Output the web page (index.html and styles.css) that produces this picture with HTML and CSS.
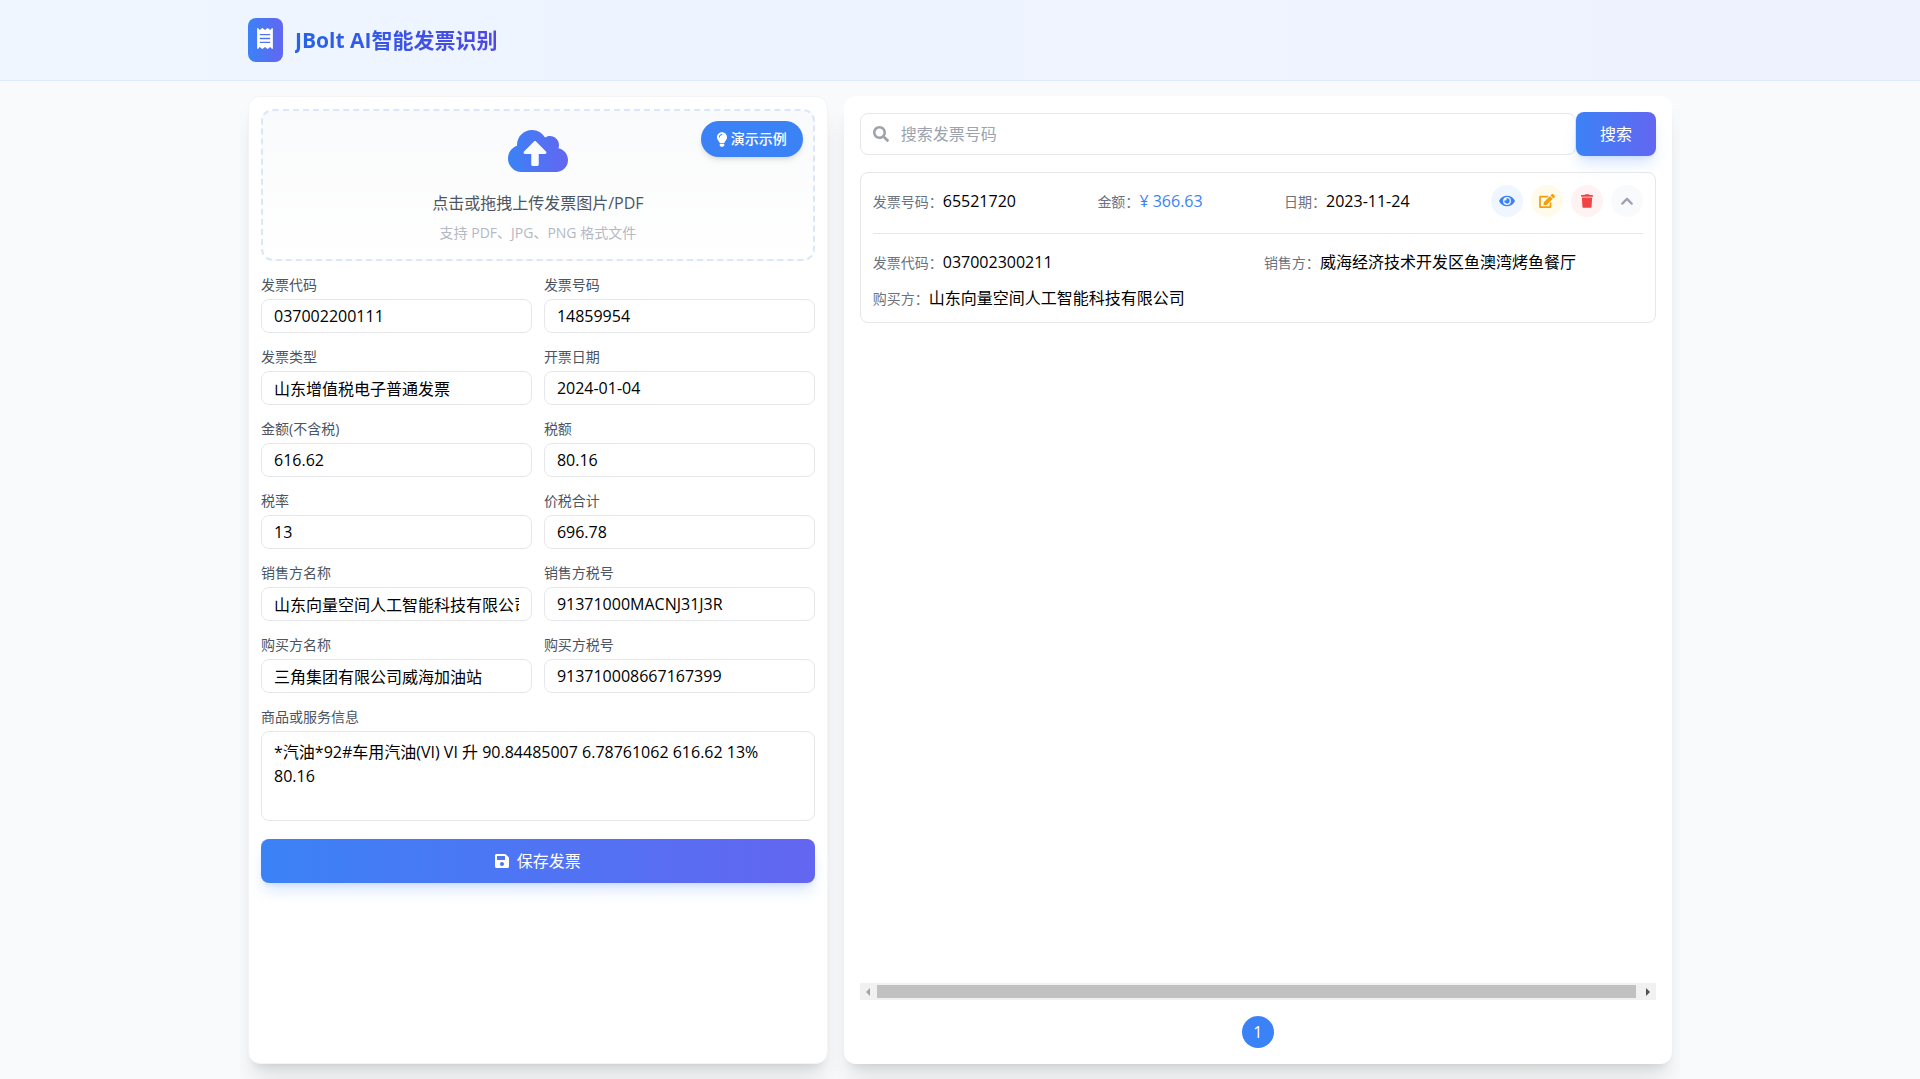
FILE: index.html
```html
<!DOCTYPE html>
<html lang="zh-CN">
<head>
<meta charset="utf-8">
<meta name="viewport" content="width=device-width, initial-scale=1">
<title>JBolt AI智能发票识别</title>
<link rel="stylesheet" href="styles.css">
</head>
<body>
<header class="header">
  <div class="container brand">
    <span class="logo">
      <svg width="16" height="21" viewBox="0 0 384 512" aria-hidden="true"><path fill="currentColor" fill-rule="evenodd" d="M358.4 3.2L320 48 265.6 3.2a15.9 15.9 0 0 0-19.2 0L192 48 137.6 3.2a15.9 15.9 0 0 0-19.2 0L64 48 25.6 3.2C15-4.7 0 2.8 0 16v480c0 13.2 15 20.7 25.6 12.8L64 464l54.4 44.8a15.9 15.9 0 0 0 19.2 0L192 464l54.4 44.8a15.9 15.9 0 0 0 19.2 0L320 464l38.4 44.8c10.5 7.9 25.6.4 25.6-12.8V16c0-13.2-15-20.7-25.6-12.8zM320 360a8 8 0 0 1-8 8H72a8 8 0 0 1-8-8v-16a8 8 0 0 1 8-8h240a8 8 0 0 1 8 8zM320 264a8 8 0 0 1-8 8H72a8 8 0 0 1-8-8v-16a8 8 0 0 1 8-8h240a8 8 0 0 1 8 8zM320 168a8 8 0 0 1-8 8H72a8 8 0 0 1-8-8v-16a8 8 0 0 1 8-8h240a8 8 0 0 1 8 8z"/></svg>
    </span>
    <h1 class="title">JBolt AI智能发票识别</h1>
  </div>
</header>

<main class="container main">
  <section class="card form-card">
    <div class="upload">
      <svg class="upload-icon" width="60" height="48" viewBox="0 0 640 512" aria-hidden="true"><defs><linearGradient id="cloud" x1="0" y1="0" x2="1" y2="0"><stop offset="0" stop-color="#3b82f6"/><stop offset="1" stop-color="#6366f1"/></linearGradient></defs><path fill="url(#cloud)" d="M537.6 226.6c4.1-10.7 6.4-22.4 6.4-34.6 0-53-43-96-96-96-19.7 0-38.1 6-53.3 16.2C367 64.2 315.3 32 256 32c-88.4 0-160 71.6-160 160 0 2.7.1 5.4.2 8.1C40.2 219.8 0 273.2 0 336c0 79.5 64.5 144 144 144h368c70.7 0 128-57.3 128-128 0-61.9-44-113.6-102.4-125.4zM393.4 288H328v112c0 8.8-7.2 16-16 16h-48c-8.8 0-16-7.2-16-16V288h-65.4c-14.3 0-21.4-17.2-11.3-27.3l105.4-105.4c6.2-6.2 16.4-6.2 22.6 0l105.4 105.4c10.1 10.1 2.9 27.3-11.3 27.3z"/></svg>
      <p class="upload-text">点击或拖拽上传发票图片/PDF</p>
      <p class="upload-hint">支持 PDF、JPG、PNG 格式文件</p>
      <button type="button" class="demo-btn">
        <svg width="10" height="15" viewBox="0 0 352 512" aria-hidden="true"><path fill="currentColor" d="M96.06 454.35c.01 6.29 1.87 12.45 5.36 17.69l17.09 25.69a31.99 31.99 0 0 0 26.64 14.28h61.71a31.99 31.99 0 0 0 26.64-14.28l17.09-25.69a31.989 31.989 0 0 0 5.36-17.69l.04-38.35H96.01l.05 38.35zM0 176c0 44.37 16.45 84.85 43.56 115.78 16.52 18.85 42.36 58.23 52.21 91.45.04.26.07.52.11.78h160.24c.04-.26.07-.51.11-.78 9.85-33.22 35.69-72.6 52.21-91.45C335.55 260.85 352 220.37 352 176 352 78.61 272.91-.3 175.45 0 73.44.31 0 82.97 0 176zm176-80c-44.11 0-80 35.89-80 80 0 8.84-7.16 16-16 16s-16-7.16-16-16c0-61.76 50.24-112 112-112 8.84 0 16 7.16 16 16s-7.16 16-16 16z"/></svg>
        <span>演示示例</span>
      </button>
    </div>

    <form class="form">
      <div class="field"><label for="code">发票代码</label><input id="code" type="text" value="037002200111"></div>
      <div class="field"><label for="number">发票号码</label><input id="number" type="text" value="14859954"></div>
      <div class="field"><label for="type">发票类型</label><input id="type" type="text" value="山东增值税电子普通发票"></div>
      <div class="field"><label for="date">开票日期</label><input id="date" type="text" value="2024-01-04"></div>
      <div class="field"><label for="amount">金额(不含税)</label><input id="amount" type="text" value="616.62"></div>
      <div class="field"><label for="tax">税额</label><input id="tax" type="text" value="80.16"></div>
      <div class="field"><label for="rate">税率</label><input id="rate" type="text" value="13"></div>
      <div class="field"><label for="total">价税合计</label><input id="total" type="text" value="696.78"></div>
      <div class="field"><label for="seller">销售方名称</label><input id="seller" type="text" value="山东向量空间人工智能科技有限公司"></div>
      <div class="field"><label for="seller-tax">销售方税号</label><input id="seller-tax" type="text" value="91371000MACNJ31J3R"></div>
      <div class="field"><label for="buyer">购买方名称</label><input id="buyer" type="text" value="三角集团有限公司威海加油站"></div>
      <div class="field"><label for="buyer-tax">购买方税号</label><input id="buyer-tax" type="text" value="913710008667167399"></div>
      <div class="field field-wide"><label for="goods">商品或服务信息</label><textarea id="goods" rows="3">*汽油*92#车用汽油(VI) VI 升 90.84485007 6.78761062 616.62 13% 80.16</textarea></div>
      <button type="button" class="primary save-btn">
        <svg width="14" height="16" viewBox="0 0 448 512" aria-hidden="true"><path fill="currentColor" d="M433.941 129.941l-83.882-83.882A48 48 0 0 0 316.118 32H48C21.49 32 0 53.49 0 80v352c0 26.51 21.49 48 48 48h352c26.51 0 48-21.49 48-48V163.882a48 48 0 0 0-14.059-33.941zM224 416c-35.346 0-64-28.654-64-64 0-35.346 28.654-64 64-64s64 28.654 64 64c0 35.346-28.654 64-64 64zm96-304.52V212c0 6.627-5.373 12-12 12H76c-6.627 0-12-5.373-12-12V108c0-6.627 5.373-12 12-12h228.52c3.183 0 6.235 1.264 8.485 3.515l3.48 3.48A11.996 11.996 0 0 1 320 111.48z"/></svg>
        <span>保存发票</span>
      </button>
    </form>
  </section>

  <section class="card list-card">
    <form class="search" role="search">
      <div class="search-box">
        <svg width="16" height="16" viewBox="0 0 512 512" aria-hidden="true"><path fill="currentColor" d="M505 442.7L405.3 343c-4.5-4.5-10.6-7-17-7H372c27.6-35.3 44-79.7 44-128C416 93.1 322.9 0 208 0S0 93.1 0 208s93.1 208 208 208c48.3 0 92.7-16.4 128-44v16.3c0 6.4 2.5 12.5 7 17l99.7 99.7c9.4 9.4 24.6 9.4 33.9 0l28.3-28.3c9.4-9.4 9.4-24.6.1-34zM208 336c-70.7 0-128-57.2-128-128 0-70.7 57.2-128 128-128 70.7 0 128 57.2 128 128 0 70.7-57.2 128-128 128z"/></svg>
        <input type="text" placeholder="搜索发票号码" aria-label="搜索发票号码">
      </div>
      <button type="button" class="primary search-btn">搜索</button>
    </form>

    <div class="results">
      <article class="invoice">
        <div class="summary">
          <p><span class="key">发票号码：</span>65521720</p>
          <p><span class="key">金额：</span><span class="money">¥ 366.63</span></p>
          <p><span class="key">日期：</span>2023-11-24</p>
          <div class="actions">
            <button type="button" class="action view" aria-label="查看"><svg width="16" height="14" viewBox="0 0 576 512"><path fill="currentColor" d="M572.52 241.4C518.29 135.59 410.93 64 288 64S57.68 135.64 3.48 241.41a32.35 32.35 0 0 0 0 29.19C57.71 376.41 165.07 448 288 448s230.32-71.64 284.52-177.41a32.35 32.35 0 0 0 0-29.19zM288 400a144 144 0 1 1 144-144 143.93 143.93 0 0 1-144 144zm0-240a95.31 95.31 0 0 0-25.31 3.79 47.85 47.85 0 0 1-66.9 66.9A95.78 95.78 0 1 0 288 160z"/></svg></button>
            <button type="button" class="action edit" aria-label="编辑"><svg width="16" height="14" viewBox="0 0 576 512"><path fill="currentColor" d="M402.6 83.2l90.2 90.2c3.8 3.8 3.8 10 0 13.8L274.4 405.6l-92.8 10.3c-12.4 1.4-22.9-9.1-21.5-21.5l10.3-92.8L388.8 83.2c3.8-3.8 10-3.8 13.8 0zm162-22.9l-48.8-48.8c-15.2-15.2-39.9-15.2-55.2 0l-35.4 35.4c-3.8 3.8-3.8 10 0 13.8l90.2 90.2c3.8 3.8 10 3.8 13.8 0l35.4-35.4c15.2-15.3 15.2-40 0-55.2zM384 346.2V448H64V128h229.8c3.2 0 6.2-1.3 8.5-3.5l40-40c7.6-7.6 2.2-20.5-8.5-20.5H48C21.5 64 0 85.5 0 112v352c0 26.5 21.5 48 48 48h352c26.5 0 48-21.5 48-48V306.2c0-10.7-12.9-16-20.5-8.5l-40 40c-2.2 2.3-3.5 5.3-3.5 8.5z"/></svg></button>
            <button type="button" class="action remove" aria-label="删除"><svg width="12" height="14" viewBox="0 0 448 512"><path fill="currentColor" d="M432 32H312l-9.4-18.7A24 24 0 0 0 281.1 0H166.8a23.72 23.72 0 0 0-21.4 13.3L136 32H16A16 16 0 0 0 0 48v32a16 16 0 0 0 16 16h416a16 16 0 0 0 16-16V48a16 16 0 0 0-16-16zM53.2 467a48 48 0 0 0 47.9 45h245.8a48 48 0 0 0 47.9-45L416 128H32z"/></svg></button>
            <button type="button" class="action toggle" aria-label="收起"><svg width="12" height="14" viewBox="0 0 12 14"><path fill="none" stroke="currentColor" stroke-width="2.2" stroke-linecap="round" stroke-linejoin="round" d="M1.3 9.6L6 4.9l4.7 4.7"/></svg></button>
          </div>
        </div>
        <div class="details">
          <p><span class="key">发票代码：</span>037002300211</p>
          <p><span class="key">销售方：</span>威海经济技术开发区鱼澳湾烤鱼餐厅</p>
          <p><span class="key">购买方：</span>山东向量空间人工智能科技有限公司</p>
        </div>
      </article>
    </div>

    <div class="scrollbar" aria-hidden="true">
      <span class="arrow arrow-left"></span>
      <span class="thumb"></span>
      <span class="arrow arrow-right"></span>
    </div>
    <nav class="pager" aria-label="分页"><button type="button" class="page">1</button></nav>
  </section>
</main>
</body>
</html>
```
FILE: styles.css
```css
* { box-sizing: border-box; }

body {
  margin: 0;
  min-height: 100vh;
  display: flex;
  flex-direction: column;
  background: #f9fafb linear-gradient(135deg, #f8fafc, #f9fafb);
  color: #000;
  font: 16px/24px "Open Sans", "Noto Sans CJK SC", sans-serif;
}

h1, p { margin: 0; }
svg { display: block; flex: none; }
button, input, textarea { font: inherit; color: inherit; }
button { border: 0; padding: 0; cursor: pointer; }

.container {
  width: 100%;
  max-width: 1440px;
  margin: 0 auto;
  padding: 0 8px;
}

/* Header */
.header {
  padding: 18px 0;
  border-bottom: 1px solid #dbeafe;
  background: linear-gradient(90deg, #eff6ff, #eef2ff);
}
.brand { display: flex; align-items: center; gap: 12px; }
.logo {
  display: flex;
  padding: 10px 10px 13px 9px;
  border-radius: 8px;
  color: #fff;
  background: linear-gradient(90deg, #3b82f6, #6366f1);
}
.title {
  font-size: 21px;
  line-height: 28px;
  font-weight: 700;
  color: transparent;
  background: linear-gradient(90deg, #2563eb, #4f46e5);
  background-clip: text;
  -webkit-background-clip: text;
}

/* Two-column layout */
.main {
  flex: 1;
  display: grid;
  grid-template-columns: minmax(0, 7fr) minmax(0, 10fr);
  gap: 16px;
  padding: 15px 8px;
  overflow: hidden;
}
.card {
  border-radius: 12px;
  background: #fff;
  box-shadow: 0 20px 25px -5px rgba(0, 0, 0, .1), 0 8px 10px -6px rgba(0, 0, 0, .1);
}

/* Recognition form */
.form-card { padding: 12px; border: 1px solid #f3f4f6; }
.upload {
  position: relative;
  display: flex;
  flex-direction: column;
  align-items: center;
  padding: 16px;
  border: 2px dashed #dbe6fa;
  border-radius: 12px;
  background: linear-gradient(#f9fafb, #fff);
}
.upload-text { margin-top: 16px; color: #4b5563; }
.upload-hint { margin-top: 8px; font-size: 14px; line-height: 20px; color: #b4b9c3; }
.demo-btn {
  position: absolute;
  top: 10px;
  right: 10px;
  display: flex;
  align-items: center;
  gap: 4px;
  padding: 8px 16px;
  border-radius: 18px;
  background: #3b82f6;
  color: #fff;
  font-size: 14px;
  line-height: 20px;
  font-weight: 500;
  box-shadow: 0 4px 6px -1px rgba(0, 0, 0, .1), 0 2px 4px -2px rgba(0, 0, 0, .1);
}

.form {
  display: grid;
  grid-template-columns: repeat(2, minmax(0, 1fr));
  gap: 14px 12px;
  margin-top: 14px;
}
.field { display: flex; flex-direction: column; gap: 4px; }
.field-wide { grid-column: 1 / -1; }
.field label { font-size: 14px; line-height: 20px; color: #4b5563; }
.field input,
.field textarea {
  width: 100%;
  padding: 4px 12px;
  border: 1px solid #e5e7eb;
  border-radius: 8px;
  background: #fff;
  outline: 0;
}
.field input { height: 34px; }
.field textarea { padding: 8px 12px; resize: none; overflow: hidden; display: block; }

.primary {
  height: 44px;
  border-radius: 8px;
  color: #fff;
  background: linear-gradient(90deg, #3b82f6, #6366f1);
  box-shadow: 0 10px 15px -3px rgba(59, 130, 246, .2), 0 4px 6px -4px rgba(59, 130, 246, .2);
}
.save-btn {
  grid-column: 1 / -1;
  display: flex;
  align-items: center;
  justify-content: center;
  gap: 8px;
  margin-top: 4px;
}

/* Invoice list */
.list-card { display: flex; flex-direction: column; padding: 16px; }
.search { display: flex; align-items: center; }
.search-box {
  flex: 1;
  display: flex;
  align-items: center;
  gap: 12px;
  height: 42px;
  padding: 0 12px;
  border: 1px solid #e5e7eb;
  border-radius: 8px;
  color: #9ca3af;
}
.search-box input { flex: 1; min-width: 0; padding: 0; border: 0; outline: 0; background: none; color: #000; }
.search-box input::placeholder { color: #9ca3af; opacity: 1; }
.search-btn { width: 80px; }

.results { flex: 1; padding: 16px 0; }
.invoice { padding: 12px; border: 1px solid #e5e7eb; border-radius: 8px; }
.summary {
  display: flex;
  justify-content: space-between;
  align-items: center;
  padding-bottom: 16px;
  border-bottom: 1px solid #e5e7eb;
}
.details {
  display: grid;
  grid-template-columns: repeat(2, minmax(0, 1fr));
  gap: 12px;
  padding-top: 16px;
}
.key { font-size: 14px; line-height: 20px; color: #6b7280; }
.money { color: #3b82f6; }
.actions { display: flex; gap: 8px; }
.action {
  display: flex;
  align-items: center;
  justify-content: center;
  width: 32px;
  height: 32px;
  border-radius: 50%;
}
.view { color: #3b82f6; background: #eff6ff; }
.edit { color: #f59e0b; background: #fffbeb; }
.remove { color: #ef4444; background: #fef2f2; }
.toggle { color: #9ca3af; background: #f9fafb; }

.scrollbar { display: flex; align-items: center; height: 17px; background: #f1f1f1; }
.thumb { flex: 1; height: 13px; margin-right: 3px; background: #c1c1c1; }
.arrow { display: flex; align-items: center; justify-content: center; width: 17px; }
.arrow::before { content: ""; border: 4px solid transparent; }
.arrow-left::before { border-left-width: 0; border-right-color: #a3a3a3; }
.arrow-right::before { border-right-width: 0; border-left-color: #505050; }

.pager { display: flex; justify-content: center; margin-top: 16px; }
.page { width: 32px; height: 32px; border-radius: 50%; background: #3b82f6; color: #fff; }
```
